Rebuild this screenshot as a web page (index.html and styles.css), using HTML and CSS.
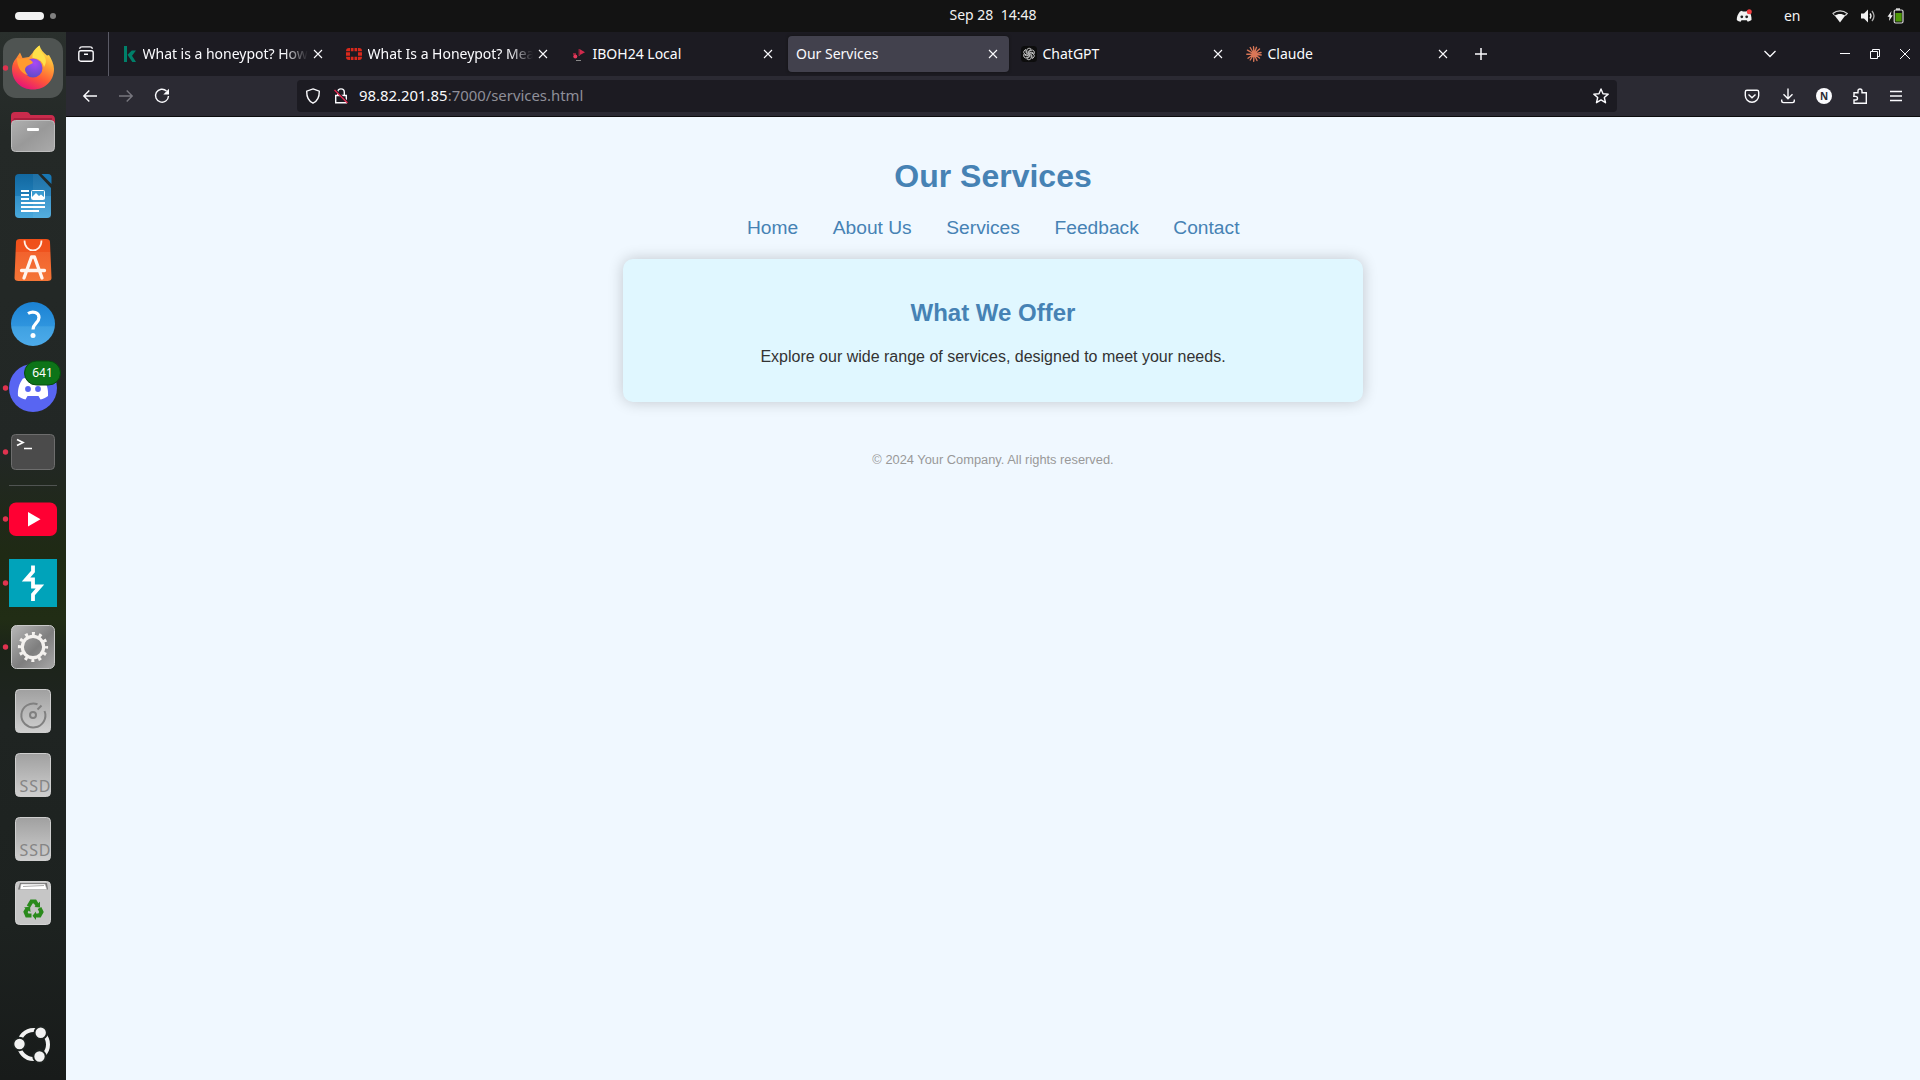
FILE: index.html
```html
<!DOCTYPE html>
<html lang="en">
<head>
<meta charset="utf-8">
<title>Our Services</title>
<link rel="stylesheet" href="styles.css">
</head>
<body>
<header class="topbar">
  <div class="workspaces"><span class="pill"></span><span class="dot"></span></div>
  <div class="clock">Sep 28 &nbsp;14:48</div>
  <div class="tray">
    <svg class="tray-discord" width="18" height="14" viewBox="0 0 18 14"><path fill="#f2f2f2" d="M4 2.500 6 1.700l.7.9h3.600l.7-.9 2.300.8c1.600 2.600 2.400 5.400 2.200 8.600-1.200.9-2.400 1.400-3.800 1.600l-.9-1.500H5.500l-.9 1.500C3.200 12.500 2 12 .8 11 .6 7.800 1.900 5 4 2.500z"/><circle cx="5.800" cy="7.800" r="1.400" fill="#222"/><circle cx="10.700" cy="7.800" r="1.400" fill="#222"/><circle cx="13.300" cy="2.700" r="2.500" fill="#f23f42"/></svg>
    <span class="lang">en</span>
    <svg class="wifi" width="16" height="14" viewBox="0 0 16 14"><path fill="#f2f2f2" d="M8 13.500 2.700 6.600C5.800 4.400 10.200 4.400 13.300 6.600z"/><path d="M.8 4.400C5 1 11 1 15.200 4.400L13.300 6.600" fill="none" stroke="#d8d8d8" stroke-width="1.300"/><path d="M.8 4.400 2.700 6.600" stroke="#d8d8d8"/></svg>
    <svg class="volume" width="16" height="16" viewBox="0 0 16 16"><path fill="#f2f2f2" d="M1 5.500h3L8 1.500v13L4 10.500H1z"/><path d="M10 5.500q2 2.500 0 5" fill="none" stroke="#f2f2f2" stroke-width="1.300"/><path d="M12 3q4 5 0 10" fill="none" stroke="#aaa" stroke-width="1.300"/></svg>
    <svg class="battery" width="17" height="16" viewBox="0 0 17 16"><path fill="#f2f2f2" d="M4.500 3 .5 8.700h2L2 13l3.800-5.700H3.700z"/><path fill="#ddd" d="M9 .3h4v2H9z"/><rect x="7.200" y="2" width="8.800" height="13" rx="1.500" fill="none" stroke="#d8d8d8" stroke-width="1.200"/><path fill="#4e9a06" d="M8.500 5h6.200v8.500H8.500z"/></svg>
  </div>
</header>
<div class="desktop">
  <aside class="dock">
    <svg class="slot" viewBox="0 0 66 64">
      <defs>
        <linearGradient id="fx" x1=".8" y1="0" x2=".3" y2="1"><stop offset="0" stop-color="#fff44f"/><stop offset=".35" stop-color="#ffa436"/><stop offset=".65" stop-color="#ff5a36"/><stop offset="1" stop-color="#e5107a"/></linearGradient>
        <radialGradient id="fxb" cx=".6" cy=".25" r=".8"><stop offset="0" stop-color="#a948f5"/><stop offset="1" stop-color="#5b4bc6"/></radialGradient>
        <linearGradient id="gray" x1="0" y1="0" x2="0" y2="1"><stop offset="0" stop-color="#a0a0a0"/><stop offset="1" stop-color="#cfcfcf"/></linearGradient>
        <linearGradient id="folder" x1="0" y1="0" x2="1" y2="1"><stop offset="0" stop-color="#b0b0b0"/><stop offset=".5" stop-color="#999"/><stop offset="1" stop-color="#aaa"/></linearGradient>
        <linearGradient id="gearbg" x1="0" y1="0" x2="1" y2="1"><stop offset="0" stop-color="#b8b8b8"/><stop offset=".55" stop-color="#7e7e7e"/><stop offset="1" stop-color="#a8a8a8"/></linearGradient>
        <linearGradient id="blue" x1="0" y1="0" x2="0" y2="1"><stop offset="0" stop-color="#1268a0"/><stop offset=".49" stop-color="#1f7db8"/><stop offset=".5" stop-color="#318fc8"/><stop offset="1" stop-color="#4aa9dc"/></linearGradient>
        <linearGradient id="help" x1="0" y1="0" x2="0" y2="1"><stop offset="0" stop-color="#1b82d4"/><stop offset=".55" stop-color="#2f95de"/><stop offset=".56" stop-color="#3fa1e2"/><stop offset="1" stop-color="#4dabea"/></linearGradient>
        <linearGradient id="orange" x1="0" y1="0" x2="0" y2="1"><stop offset="0" stop-color="#f04f19"/><stop offset=".3" stop-color="#f0531e"/><stop offset=".31" stop-color="#f2622d"/><stop offset="1" stop-color="#f57637"/></linearGradient>
      </defs>
      <rect x="3" y="2" width="60" height="60" rx="13" fill="#4f5452"/>
      <circle cx="5.500" cy="32" r="2.700" fill="#e0334f"/>
      <path fill="url(#fx)" d="M16 22.500 20 16.500 22.500 22 29 21 32.500 17C34 13.500 37 11.500 39.500 9.500 40.500 13.500 43.500 16.500 47 19.500L49 19C51.500 23 54 28 54 33 54 45 45 53.500 33 53.500S12 45 12 33C12 28.500 13.500 25.500 16 22.500z"/>
      <path fill="#ffe14a" d="M39.500 9.500C35 13 32 17 32.500 22 39 22 43 26 44 31 48 25 45 20 42 17 40 14.500 39.500 12 39.500 9.500z"/>
      <circle cx="33" cy="32" r="9.500" fill="url(#fxb)"/>
      <path fill="#ff9b2f" d="M17 22 24 23C28 22 32 24 33 27L27 30C23 33 26 37 28 39 22 38 17 32 17 22z"/>
    </svg>
    <svg class="slot" viewBox="0 0 66 64"><path fill="#c92b4c" d="M11 16q0-4 4-4h12q2 0 3.500 3H51q4 0 4 5v8H11z"/><path fill="#a81f3d" d="M14 18h38v4H12z"/><rect x="11.500" y="20.500" width="43" height="31" rx="4" fill="url(#folder)" stroke="#bdbdbd"/><rect x="27" y="28" width="12" height="3" rx="1" fill="#fff"/></svg>
    <svg class="slot" viewBox="0 0 66 64"><path fill="url(#blue)" d="M19 10h19l13 14v26q0 4-4 4H19q-4 0-4-4V14q0-4 4-4z"/><path fill="#fff" opacity=".06" d="M33 10h5l13 14v30H33z"/><path fill="#1877b4" d="M41.500 10H48q3.500 0 3.500 3.500v6.500z"/><path stroke="#fff" stroke-width="1.800" d="M21 27h8M21 31h8M21 35h8M21 39h24M21 43h24M21 47h18"/><rect x="31.500" y="26.500" width="13" height="9" rx="1" fill="#3b9bd0" stroke="#fff"/><path fill="#fff" d="M32 35v-2l4-4 3 3 2-1.500 3.500 3V35z"/></svg>
    <svg class="slot" viewBox="0 0 66 64"><path fill="url(#orange)" d="M20 11h26q4 0 4 3l1.500 36q0 3-4 3h-29q-4 0-4-3L16 14q0-3 4-3z"/><path d="M24.500 12.500c0 13 17 13 17 0" fill="none" stroke="#fff1e8" stroke-width="1.700"/><path d="M24 50 31.500 29h3L42 50M21.500 42.500h23" fill="none" stroke="#fff5ef" stroke-width="3.300" stroke-linecap="round" stroke-linejoin="round"/></svg>
    <svg class="slot" viewBox="0 0 66 64"><circle cx="33" cy="32" r="22" fill="url(#help)"/><path d="M28 21.500c5-3 11-1 11 4 0 5.500-6 6-6 12" fill="none" stroke="#fff" stroke-width="3.200"/><circle cx="33" cy="43.500" r="2.500" fill="#fff"/></svg>
    <svg class="slot" viewBox="0 0 66 64"><circle cx="5.500" cy="32" r="2.700" fill="#e0334f"/><circle cx="33" cy="32" r="24" fill="#5865f2"/><path fill="#fff" d="M23 22.500 29 21l1 2h6l1-2 6 1.500c4 5 5.500 11 5 17.500-2.500 2-5 3-7.500 3.500L38.500 40h-11l-2 3.500C23 43 20.500 42 18 40c-.5-6.500 1-12.500 5-17.500z"/><circle cx="28" cy="33" r="2.900" fill="#5865f2"/><circle cx="38" cy="33" r="2.900" fill="#5865f2"/><rect x="24.500" y="5" width="36" height="24" rx="12" fill="#0d7418" stroke="#064a0e"/><text class="badge-text" x="42.500" y="20.700" text-anchor="middle">641</text></svg>
    <svg class="slot" viewBox="0 0 66 64"><circle cx="5.500" cy="32" r="2.700" fill="#e0334f"/><rect x="11.500" y="14.500" width="43" height="35" rx="4" fill="#4b4b4b" stroke="#6d6d6d"/><path d="M17 19.500 23 22.500 17 25.500M24 28.500h8" fill="none" stroke="#fff" stroke-width="1.700"/></svg>
    <div class="dock-line"></div>
    <svg class="slot" viewBox="0 0 66 64"><circle cx="5.500" cy="32" r="2.700" fill="#e0334f"/><rect x="9" y="15.500" width="48" height="33.500" rx="7" fill="#ff0033"/><path fill="#fff" d="M28 25v14.500l12.500-7.200z"/></svg>
    <svg class="slot" viewBox="0 0 66 64"><circle cx="5.500" cy="32" r="2.700" fill="#e0334f"/><path fill="#00a3ba" d="M9 8h48v48H9z"/><path fill="none" stroke="#fff" stroke-width="3.800" d="M33 14.500V20.500L26 28.500H33V35.500H40L33 43.500V50"/></svg>
    <svg class="slot" viewBox="0 0 66 64"><circle cx="5.500" cy="32" r="2.700" fill="#e0334f"/><rect x="11.500" y="10.500" width="43" height="43" rx="5" fill="url(#gearbg)" stroke="#c8c8c8"/><circle cx="33" cy="32" r="10.700" fill="none" stroke="#f3f1ee" stroke-width="3.200"/><circle cx="33" cy="32" r="13.300" fill="none" stroke="#f3f1ee" stroke-width="3.600" stroke-dasharray="3 3.963" stroke-dashoffset="1.500"/></svg>
    <svg class="slot" viewBox="0 0 66 64"><rect x="15.500" y="10.500" width="35" height="43" rx="4" fill="url(#gray)" stroke="#cecece"/><path d="M37.500 25.200A12 12 0 1 0 44.500 32M37.500 30.500l4-4" fill="none" stroke="#808080" stroke-width="2"/><circle cx="33" cy="36" r="3" fill="none" stroke="#808080" stroke-width="2"/></svg>
    <svg class="slot" viewBox="0 0 66 64"><rect x="15.500" y="10.500" width="35" height="43" rx="4" fill="url(#gray)" stroke="#cecece"/><text class="ssd" x="19.500" y="49" textLength="31">SSD</text></svg>
    <svg class="slot" viewBox="0 0 66 64"><rect x="15.500" y="10.500" width="35" height="43" rx="4" fill="url(#gray)" stroke="#cecece"/><text class="ssd" x="19.500" y="49" textLength="31">SSD</text></svg>
    <svg class="slot" viewBox="0 0 66 64"><rect x="15.500" y="10.500" width="35" height="43" rx="4" fill="#c6c6c6" stroke="#d4d4d4"/><path fill="#777" d="M20 12h27l1 6.500H18z"/><path fill="#fff" stroke="#aaa" stroke-width=".5" d="M21 13h24l2 5.500H20z"/><path d="M23 15.500 44 14.500" stroke="#aaa"/>
      <g transform="translate(0 -1)"><g fill="none" stroke="#2a8a1c" stroke-width="4"><path d="M28.500 36.500 31.500 31.500H35L37.500 35.500"/><path d="M39.500 38 41.500 42 39.500 45.500H35.500"/><path d="M31.500 45.500H27L25.500 42 27.500 38.500"/></g><path fill="#2a8a1c" d="M34.500 37 40 37.500V31.500zM36 41.500V50L32.500 45.800zM24 37.500 30 36.500 30.500 42z"/></g></svg>
    <div class="dock-space"></div>
    <svg class="slot" viewBox="0 0 66 64"><circle cx="33.500" cy="32.500" r="14.500" fill="none" stroke="#f2f2f2" stroke-width="4"/><g fill="#f2f2f2" stroke="#1e2321" stroke-width="2"><circle cx="19.500" cy="32" r="6.200"/><circle cx="40.700" cy="20.800" r="6.200"/><circle cx="39.500" cy="44.500" r="6.200"/></g></svg>
  </aside>
  <main class="browser">
    <div class="tabs">
      <div class="fxview"><svg width="16" height="16" viewBox="0 0 16 16" fill="none" stroke="#fbfbfe" stroke-width="1.400"><rect x=".8" y="4.700" width="14.400" height="10.500" rx="2"/><path d="M1.500 2.800Q2 .9 4 .9h8q2 0 2.500 1.900M6 8.300h4"/></svg></div>
      <div class="tab"><svg width="16" height="16" viewBox="0 0 16 16"><path fill="#00806a" d="M3 0h3v16H3zM6.500 8.800 10.800 4.500H15L11 9.800 15 16h-3.700z"/></svg><span class="tab-label long">What is a honeypot? How</span><svg class="x" width="10" height="10" viewBox="0 0 10 10"><path d="m1 1 8 8M9 1 1 9"/></svg></div>
      <div class="tab"><svg width="16" height="16" viewBox="0 0 16 16"><path fill="#da291c" d="M4.800 2h2.700v3.200H4.800zM8.500 2h2.700v3.200H8.500zM4.800 10.800h2.700V14H4.800zM8.500 10.800h2.700V14H8.500zM0 6.300h4v3.400H0zM12 6.300h4v3.400h-4zM4 2v3.200H0Q0 2 3 2zM12 2h1q3 0 3 3.200h-4zM0 10.800h4V14H3Q0 14 0 10.800zM12 10.800h4Q16 14 13 14h-1z"/></svg><span class="tab-label long">What Is a Honeypot? Mea</span><svg class="x" width="10" height="10" viewBox="0 0 10 10"><path d="m1 1 8 8M9 1 1 9"/></svg></div>
      <div class="tab"><svg width="16" height="16" viewBox="0 0 16 16"><path fill="#d12a4d" d="m8.500 3 5.500 3.200-5.500 3z"/><path fill="#8e2339" d="M2 7h3v2H2zM9 3H7.500v7H9z"/><circle cx="4.300" cy="10.500" r="2" fill="#e63a5c"/><path stroke="#888" d="M5 14.500h5"/></svg><span class="tab-label">IBOH24 Local</span><svg class="x" width="10" height="10" viewBox="0 0 10 10"><path d="m1 1 8 8M9 1 1 9"/></svg></div>
      <div class="tab active"><span class="tab-label">Our Services</span><svg class="x" width="10" height="10" viewBox="0 0 10 10"><path d="m1 1 8 8M9 1 1 9"/></svg></div>
      <div class="tab"><svg width="16" height="16" viewBox="0 0 16 16"><rect width="16" height="16" rx="3.500" fill="#0d0d0d"/><g fill="none" stroke="#d0d0d0" stroke-width=".85"><path id="petal" d="M8 7 5.800 8.200V4.500Q6 2.300 8 2.200 9.500 2.200 10.300 3.200L7.500 5"/><use href="#petal" transform="rotate(60 8 8)"/><use href="#petal" transform="rotate(120 8 8)"/><use href="#petal" transform="rotate(180 8 8)"/><use href="#petal" transform="rotate(240 8 8)"/><use href="#petal" transform="rotate(300 8 8)"/></g></svg><span class="tab-label">ChatGPT</span><svg class="x" width="10" height="10" viewBox="0 0 10 10"><path d="m1 1 8 8M9 1 1 9"/></svg></div>
      <div class="tab"><svg width="16" height="16" viewBox="0 0 16 16" stroke="#d97757" stroke-width="1.400" stroke-linecap="round"><path d="M8 8 7.500.8M8 8l2.500-6.700M8 8l5.500-5M8 8l7-1.500M8 8l7.200 1M8 8l5.500 4M8 8l3 6.500M8 8l-.3 7.300M8 8l-3.800 6M8 8l-6 4.200M8 8 .8 8.200M8 8 1.500 4.200M8 8 4.200 1.500"/></svg><span class="tab-label">Claude</span><svg class="x" width="10" height="10" viewBox="0 0 10 10"><path d="m1 1 8 8M9 1 1 9"/></svg></div>
      <svg class="newtab" width="14" height="14" viewBox="0 0 14 14"><path d="M7 1v12M1 7h12" stroke="#fbfbfe" stroke-width="1.500"/></svg>
      <div class="window-controls">
        <svg class="chev" width="14" height="14" viewBox="0 0 14 14"><path d="m1.500 4 5.500 5.500L12.500 4" fill="none" stroke="#fbfbfe" stroke-width="1.300"/></svg>
        <svg width="12" height="12" viewBox="0 0 12 12"><path d="M1 5.500h10" stroke="#fbfbfe"/></svg>
        <svg width="12" height="12" viewBox="0 0 12 12" fill="none" stroke="#fbfbfe"><path d="M1.500 3.500h7v7h-7zM3.500 3.500v-2h7v7h-2"/></svg>
        <svg width="12" height="12" viewBox="0 0 12 12" stroke="#fbfbfe"><path d="m1 1 10 10M11 1 1 11"/></svg>
      </div>
    </div>
    <div class="toolbar">
      <div class="nav-buttons">
        <svg width="16" height="16" viewBox="0 0 16 16" fill="none" stroke="#fbfbfe" stroke-width="1.400"><path d="M15 8H1.800M7.300 2.500 1.800 8l5.500 5.500"/></svg>
        <svg width="16" height="16" viewBox="0 0 16 16" fill="none" stroke="#78777f" stroke-width="1.400"><path d="M1 8h13.200M8.700 2.500 14.200 8l-5.500 5.500"/></svg>
        <svg width="16" height="16" viewBox="0 0 16 16" fill="none" stroke="#fbfbfe" stroke-width="1.400"><path d="M12.500 3A6.500 6.500 0 1 0 14.500 8"/><path fill="#fbfbfe" stroke="none" d="M15 .8v5.700H9.300z"/></svg>
      </div>
      <div class="urlbar">
        <svg width="16" height="16" viewBox="0 0 16 16" fill="none" stroke="#fbfbfe" stroke-width="1.400"><path d="M8 .9 14.300 3.200C14.400 8.500 12.500 13 8 15.200 3.500 13 1.600 8.500 1.700 3.200z"/></svg>
        <svg width="16" height="16" viewBox="0 0 16 16" fill="none" stroke="#fbfbfe" stroke-width="1.400"><path d="M2.700 7.500h10.600v7.300H2.700zM4.700 7.500V4.200q0-3.300 3.300-3.300t3.300 3.300v3.300"/><path stroke="#1c1b22" stroke-width="1.500" d="m2.300 1.500 12.500 12.500"/><path stroke="#e22850" d="m1.500 2 13 13"/></svg>
        <span class="url">98.82.201.85<span class="path">:7000/services.html</span></span>
        <svg class="star" width="16" height="16" viewBox="0 0 16 16" fill="none" stroke="#fbfbfe" stroke-width="1.400" stroke-linejoin="round"><path d="M8 1 10 5.700 15.200 6.100 11.300 9.500 12.500 14.700 8 11.900 3.500 14.700 4.700 9.500.8 6.100 6 5.700z"/></svg>
      </div>
      <div class="actions">
        <svg width="16" height="16" viewBox="0 0 16 16" fill="none" stroke="#fbfbfe" stroke-width="1.400"><path d="M3 2.300h10q1.700 0 1.700 1.700v3.500a6.700 6.700 0 0 1-13.400 0V4q0-1.700 1.700-1.700zM4.500 6.500 8 9.700l3.500-3.200"/></svg>
        <svg width="16" height="16" viewBox="0 0 16 16" fill="none" stroke="#fbfbfe" stroke-width="1.400"><path d="M8 .5v10M3.500 6.300 8 10.700l4.500-4.400M1.700 11.500v1.300q0 1.800 1.800 1.800h9q1.800 0 1.800-1.800v-1.300"/></svg>
        <svg width="16" height="16" viewBox="0 0 16 16"><circle cx="8" cy="8" r="8" fill="#fbfbfe"/><text class="avatar" x="8" y="11.600" text-anchor="middle">N</text></svg>
        <svg width="16" height="16" viewBox="0 0 16 16" fill="none" stroke="#fbfbfe" stroke-width="1.400"><path d="M2 7V4.700h4V3q0-2 2-2t2 2v1.700h4.300v10.500H2V12h1.500q2 0 2-1.800t-2-1.800H1.800z"/></svg>
        <svg width="16" height="16" viewBox="0 0 16 16"><path d="M2 3.500h12M2 8h12M2 12.500h12" stroke="#fbfbfe" stroke-width="1.300"/></svg>
      </div>
    </div>
    <div class="page">
      <h1>Our Services</h1>
      <nav><a>Home</a><a>About Us</a><a>Services</a><a>Feedback</a><a>Contact</a></nav>
      <section class="card">
        <h2>What We Offer</h2>
        <p>Explore our wide range of services, designed to meet your needs.</p>
      </section>
      <footer>© 2024 Your Company. All rights reserved.</footer>
    </div>
  </main>
</div>
</body>
</html>
```
FILE: styles.css
```css
* { box-sizing: border-box; }
body {
  margin: 0;
  width: 1920px;
  height: 1080px;
  overflow: hidden;
  background: #131313;
  font-family: "Noto Sans", "Open Sans", sans-serif;
  font-size: 14px;
  color: #fbfbfe;
}
svg { display: block; flex: none; }

.topbar {
  display: grid;
  grid-template-columns: 1fr 90px 1fr;
  align-items: center;
  height: 32px;
  padding: 0 15px;
  background: #131313;
  color: #f2f2f2;
}
.workspaces { display: flex; align-items: center; gap: 6px; }
.pill { width: 29px; height: 8px; border-radius: 4px; background: #f2f2f2; }
.dot { width: 6px; height: 6px; border-radius: 3px; background: #808080; }
.clock { text-align: center; white-space: nowrap; line-height: 30px; margin-left: 33px; margin-right: -33px; height: 32px; }
.tray { display: flex; align-items: center; justify-content: flex-end; padding-right: 1px; }
.tray-discord { margin-right: -1px; }
.lang { margin: 0 31.5px 0 30.5px; line-height: 30px; height: 31px; }
.wifi { margin-right: 12px; }
.volume { margin-right: 11px; }

.desktop { display: flex; height: 1048px; }
.dock {
  display: flex;
  flex-direction: column;
  width: 66px;
  padding-top: 4px;
  background: linear-gradient(180deg, #2a302d 0, #242927 10%, #222725 40%, #20291a 46%, #1f2a14 50%, #212d15 56%, #1c2419 59%, #1f2422 66%, #1d2220 85%, #181b1a 100%);
}
.slot { width: 66px; height: 64px; }
.dock-line { height: 1px; margin: 1px 9px; background: #505452; }
.dock-space { flex: 1; }
.dock .slot:last-child { margin-bottom: 4px; }
.badge-text { font-size: 12px; fill: #fff; }
.ssd { font-size: 16px; fill: #858585; }

.browser { display: flex; flex-direction: column; flex: 1; }
.tabs { display: flex; align-items: center; height: 44px; background: #1c1b22; }
.fxview {
  display: flex;
  align-items: center;
  justify-content: center;
  width: 43px;
  height: 44px;
  padding-right: 2px;
  margin-right: 4px;
  border-right: 1px solid #5b5b66;
}
.tab {
  display: flex;
  align-items: center;
  gap: 5.5px;
  width: 221px;
  height: 36px;
  margin-right: 4px;
  padding: 0 11px 0 8px;
  border-radius: 4px;
}
.active { background: #42414d; box-shadow: 0 0 3px #111; }
.tab-label {
  flex: 1;
  white-space: nowrap;
  line-height: 22px;
}
.long {
  min-width: 0;
  letter-spacing: -0.02px;
  -webkit-mask-image: linear-gradient(to left, transparent 0, #000 24px);
  mask-image: linear-gradient(to left, transparent 0, #000 24px);
}
.x { stroke: #fbfbfe; stroke-width: 1.1; fill: none; }
.newtab { margin-left: 10.5px; }
.window-controls { display: flex; align-items: center; gap: 18px; margin-left: auto; padding-right: 9px; }
.chev { margin-right: 44px; }

.toolbar {
  display: flex;
  align-items: center;
  height: 41px;
  background: #2b2a33;
  border-bottom: 1px solid #0c0c0d;
}
.nav-buttons { display: flex; gap: 20px; padding-left: 16px; width: 231px; }
.urlbar {
  display: flex;
  align-items: center;
  width: 1320px;
  height: 32px;
  padding: 0 8px;
  gap: 12px;
  border-radius: 4px;
  background: #1c1b22;
}
.url { flex: 1; margin-left: -2px; font-size: 14.9px; line-height: 30px; height: 32px; }
.path { color: #8f8f99; }
.actions { display: flex; gap: 20px; margin-left: auto; padding-right: 16px; }
.avatar { font-size: 10px; font-weight: 700; fill: #2b2a33; }

.page {
  flex: 1;
  display: flex;
  flex-direction: column;
  align-items: center;
  padding-top: 41px;
  background: #f0f8ff;
  font-family: "Liberation Sans", Arial, sans-serif;
  font-size: 16px;
  color: #333;
}
h1 { margin: 0; font-size: 32px; line-height: 36px; color: #4682b4; }
nav { display: flex; gap: 34.6px; margin-top: 23px; padding-left: 0.5px; font-size: 19.2px; line-height: 22px; color: #4682b4; }
.card {
  width: 740px;
  height: 143px;
  margin-top: 20px;
  padding: 40px 20px 0;
  border-radius: 10px;
  background: #e0f7ff;
  box-shadow: 0 0 15px rgba(0, 0, 0, .2);
  text-align: center;
}
h2 { margin: 0; font-size: 24px; line-height: 27px; color: #4682b4; }
p { margin: 22px 0 0; line-height: 18px; }
footer { margin-top: 50px; font-size: 12.85px; line-height: 15px; color: #999; }
```
